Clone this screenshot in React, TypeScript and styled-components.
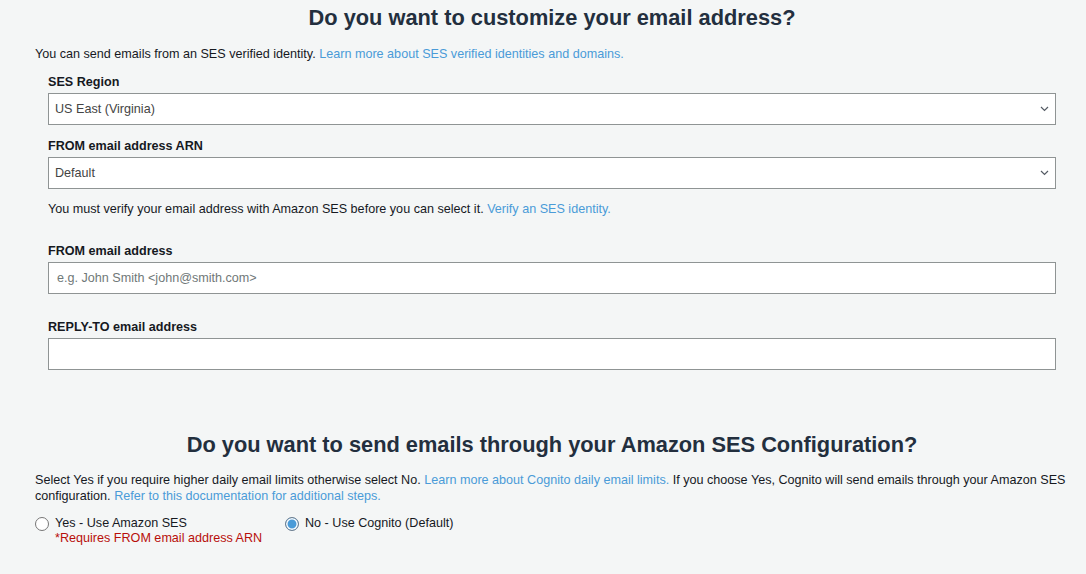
import React from "react";
import styled, { createGlobalStyle } from "styled-components";

const Global = createGlobalStyle`
  html, body { margin: 0; padding: 0; background: #f4f6f6; }
  body { font-family: "Liberation Sans", Arial, sans-serif; color: #16191f; }
`;

const Page = styled.div`
  width: 1034px;
  padding: 0 0 0 35px;
  box-sizing: content-box;
`;

const Title = styled.h2<{ $top: number }>`
  margin: ${(p) => p.$top}px 0 0 0;
  font-size: 21.8px;
  font-weight: bold;
  text-align: center;
  color: #232f3e;
  line-height: 26px;
`;

const Para = styled.p<{ $top: number }>`
  margin: ${(p) => p.$top}px 0 0 0;
  font-size: 12.6px;
  line-height: 16px;
  color: #16191f;
`;

const Link = styled.a`
  color: #4a9bd8;
  text-decoration: none;
`;

const Form = styled.div`
  padding: 0 13px;
  display: flex;
  flex-direction: column;
`;

const Field = styled.div<{ $top: number }>`
  margin-top: ${(p) => p.$top}px;
  display: flex;
  flex-direction: column;
`;

const Label = styled.label`
  font-size: 12.6px;
  font-weight: bold;
  line-height: 16px;
  color: #16191f;
  margin-bottom: 3px;
`;

const Box = styled.div<{ $pad?: number }>`
  position: relative;
  height: 32px;
  box-sizing: border-box;
  border: 1px solid #8f9494;
  background: #fff;
  display: flex;
  align-items: center;
  padding: 0 8px 0 ${(p) => p.$pad ?? 6}px;
  font-size: 12.6px;
  color: #444;
`;

const Placeholder = styled.span`
  color: #707878;
`;

const Chevron = styled.svg`
  position: absolute;
  right: 6px;
  top: 50%;
  margin-top: -3px;
`;

const Radios = styled.div`
  margin-top: 12px;
  display: flex;
  align-items: flex-start;
`;

const RadioItem = styled.div<{ $w?: number }>`
  display: flex;
  align-items: flex-start;
  width: ${(p) => (p.$w ? `${p.$w}px` : "auto")};
`;

const RadioCircle = styled.span<{ $on?: boolean }>`
  width: 14px;
  height: 14px;
  box-sizing: border-box;
  border-radius: 50%;
  border: 1px solid ${(p) => (p.$on ? "#6f7f8f" : "#767676")};
  background: ${(p) => (p.$on ? "#4a9bd8" : "#fff")};
  box-shadow: ${(p) => (p.$on ? "inset 0 0 0 1.5px #fff" : "none")};
  margin: 1px 6px 0 0;
  flex-shrink: 0;
`;

const RadioText = styled.div`
  font-size: 12.6px;
  line-height: 15px;
  color: #16191f;
`;

const Warn = styled.div`
  color: #b80f0a;
`;

const Select = ({ value }: { value: string }) => (
  <Box>
    {value}
    <Chevron width="9" height="6" viewBox="0 0 9 6">
      <path d="M1 1l3.5 3.5L8 1" fill="none" stroke="#545b64" strokeWidth="1.2" />
    </Chevron>
  </Box>
);

export default function App() {
  return (
    <>
      <Global />
      <Page>
        <Title $top={5}>Do you want to customize your email address?</Title>
        <Para $top={15}>
          You can send emails from an SES verified identity.{" "}
          <Link href="#">Learn more about SES verified identities and domains.</Link>
        </Para>
        <Form>
          <Field $top={12}>
            <Label>SES Region</Label>
            <Select value="US East (Virginia)" />
          </Field>
          <Field $top={13}>
            <Label>FROM email address ARN</Label>
            <Select value="Default" />
          </Field>
          <Para $top={12}>
            You must verify your email address with Amazon SES before you can select it.{" "}
            <Link href="#">Verify an SES identity.</Link>
          </Para>
          <Field $top={26}>
            <Label>FROM email address</Label>
            <Box $pad={8}>
              <Placeholder>e.g. John Smith &lt;john@smith.com&gt;</Placeholder>
            </Box>
          </Field>
          <Field $top={25}>
            <Label>REPLY-TO email address</Label>
            <Box />
          </Field>
        </Form>
        <Title $top={62}>Do you want to send emails through your Amazon SES Configuration?</Title>
        <Para $top={14}>
          Select Yes if you require higher daily email limits otherwise select No.{" "}
          <Link href="#">Learn more about Cognito daily email limits.</Link> If you choose Yes, Cognito
          will send emails through your Amazon SES configuration.{" "}
          <Link href="#">Refer to this documentation for additional steps.</Link>
        </Para>
        <Radios>
          <RadioItem $w={250}>
            <RadioCircle />
            <RadioText>
              Yes - Use Amazon SES
              <Warn>*Requires FROM email address ARN</Warn>
            </RadioText>
          </RadioItem>
          <RadioItem>
            <RadioCircle $on />
            <RadioText>No - Use Cognito (Default)</RadioText>
          </RadioItem>
        </Radios>
      </Page>
    </>
  );
}
